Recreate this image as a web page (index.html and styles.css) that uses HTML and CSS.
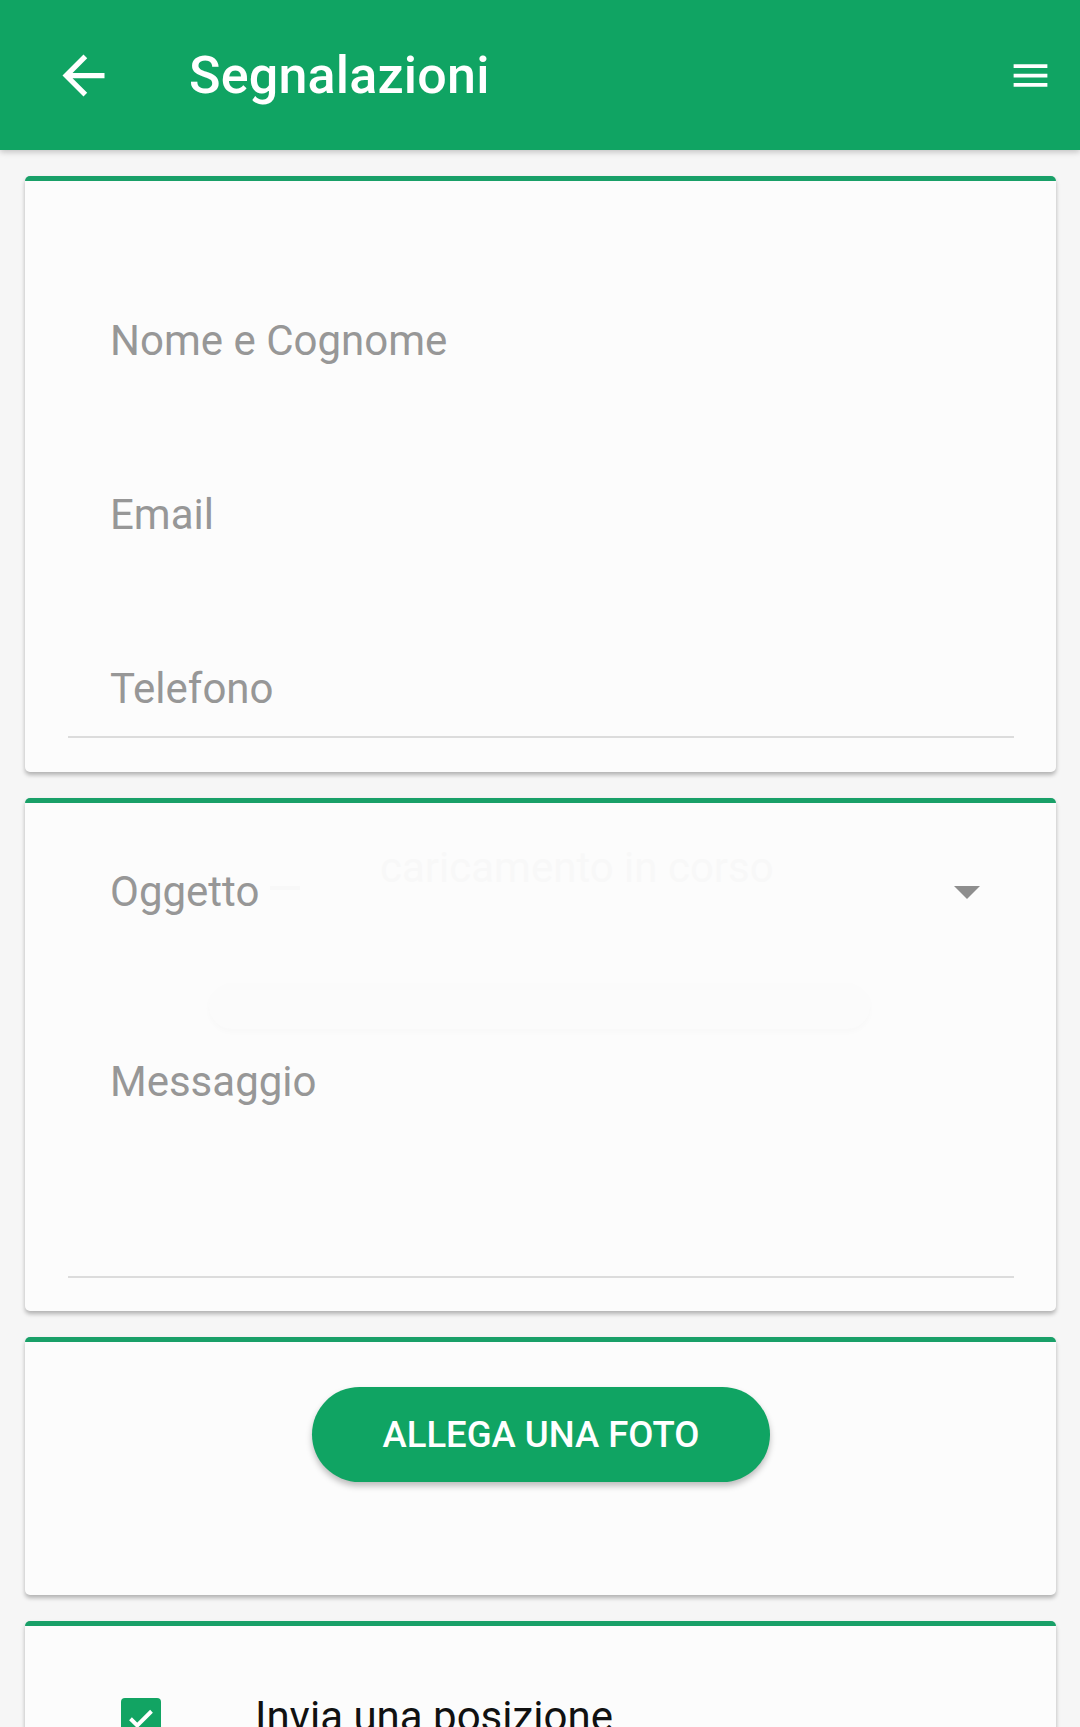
FILE: index.html
```html
<!DOCTYPE html>
<html>

	<head>
		<meta charset="UTF-8">
		<title>Segnalazioni</title>
		<link rel="stylesheet" href="styles.css">
	</head>

	<body>
		<div class="bar">
			<svg class="back" viewBox="0 0 24 24"><path d="M20 11H7.83l5.59-5.59L12 4l-8 8 8 8 1.41-1.41L7.83 13H20v-2z"/></svg>
			<h1 class="title">Segnalazioni</h1>
			<svg class="menu" viewBox="0 0 24 24"><path d="M3 18h18v-2H3v2zm0-5h18v-2H3v2zm0-7v2h18V6H3z"/></svg>
		</div>

		<div class="page">
			<div class="card card-contact">
				<div class="field">Nome e Cognome</div>
				<div class="field">Email</div>
				<div class="field field-line">Telefono</div>
			</div>

			<div class="card card-msg">
				<div class="select">
					<span class="field">Oggetto</span>
					<span class="caret"></span>
				</div>
				<div class="field field-line field-area">Messaggio</div>
				<!-- toast di caricamento quasi trasparente -->
				<div class="ghost">
					<span class="ghost-dot"></span>
					<span class="ghost-text">caricamento in corso</span>
				</div>
				<div class="ghost-pill"></div>
			</div>

			<div class="card card-photo">
				<button class="btn">ALLEGA UNA FOTO</button>
			</div>

			<div class="card card-pos">
				<label class="check">
					<span class="box">
						<svg viewBox="0 0 24 24"><path d="M5 12.5l4.5 4.5L19 7.5"/></svg>
					</span>
					<span class="check-text">Invia una posizione</span>
				</label>
			</div>
		</div>
	</body>

</html>
```

FILE: styles.css
```css
body,
h1,
p {
	margin: 0;
	padding: 0;
}

body {
	background: #f6f6f6;
	font-family: Roboto, "Liberation Sans", sans-serif;
	height: 1727px;
	overflow: hidden;
}

.bar {
	height: 150px;
	background: #10a463;
	display: flex;
	align-items: center;
	padding: 0 27px 0 52px;
	box-shadow: 0 2px 6px rgba(0, 0, 0, .22);
	position: relative;
	z-index: 2;
}

.back {
	width: 63px;
	height: 63px;
	fill: #fff;
	flex: none;
}

.title {
	font-size: 52px;
	font-weight: 500;
	color: #fff;
	margin-left: 74px;
	flex: 1;
	letter-spacing: .2px;
}

.menu {
	width: 45px;
	height: 45px;
	fill: #fff;
	flex: none;
}

.page {
	padding: 26px 24px 0 25px;
	display: flex;
	flex-direction: column;
	gap: 26px;
}

.card {
	background: #fcfcfc;
	border-top: 5px solid #19a068;
	border-radius: 5px;
	box-shadow: 0 3px 4px rgba(0, 0, 0, .28);
	padding: 0 42px 0 43px;
	position: relative;
}

.field {
	font-size: 42px;
	line-height: 50px;
	color: #979797;
	padding-left: 42px;
}

.field-line {
	padding-bottom: 22px;
	border-bottom: 2px solid #dcdcdc;
}

.card-contact {
	padding-top: 135px;
	padding-bottom: 34px;
	display: flex;
	flex-direction: column;
	gap: 124px;
}

.card-msg {
	padding-top: 64px;
	padding-bottom: 33px;
}

.select {
	display: flex;
	align-items: center;
	justify-content: space-between;
	padding-right: 34px;
}

.caret {
	width: 0;
	height: 0;
	border-left: 13.5px solid transparent;
	border-right: 13.5px solid transparent;
	border-top: 13px solid #8e8e8e;
}

.field-area {
	margin-top: 140px;
	padding-bottom: 169px;
}

.ghost {
	position: absolute;
	left: 245px;
	top: 40px;
	display: flex;
	align-items: center;
	gap: 80px;
}

.ghost-dot {
	width: 30px;
	height: 4px;
	background: #f8f8f8;
	margin-top: 40px;
}

.ghost-text {
	font-size: 42px;
	color: #f8f8f8;
}

.ghost-pill {
	position: absolute;
	left: 184px;
	top: 180px;
	width: 661px;
	height: 46px;
	border-radius: 23px;
	background: #fbfbfb;
	box-shadow: 0 3px 6px rgba(0, 0, 0, .02);
}

.card-photo {
	padding-top: 45px;
	padding-bottom: 113px;
	display: flex;
	justify-content: center;
}

.btn {
	width: 458px;
	height: 95px;
	border: 0;
	border-radius: 48px;
	background: #10a463;
	color: #fff;
	font-family: Roboto, "Liberation Sans", sans-serif;
	font-size: 36.5px;
	font-weight: 500;
	box-shadow: 0 4px 6px rgba(0, 0, 0, .25);
}

.card-pos {
	padding: 66px 0 60px 96px;
}

.check {
	display: flex;
	align-items: flex-start;
}

.box {
	width: 40px;
	height: 40px;
	margin-top: 6px;
	border-radius: 4px;
	background: #12a463;
	display: flex;
	align-items: center;
	justify-content: center;
	flex: none;
}

.box svg {
	width: 36px;
	height: 36px;
	fill: none;
	stroke: #fff;
	stroke-width: 2.6;
}

.check-text {
	font-size: 42px;
	line-height: 50px;
	color: #111;
	margin-left: 94px;
}
```
